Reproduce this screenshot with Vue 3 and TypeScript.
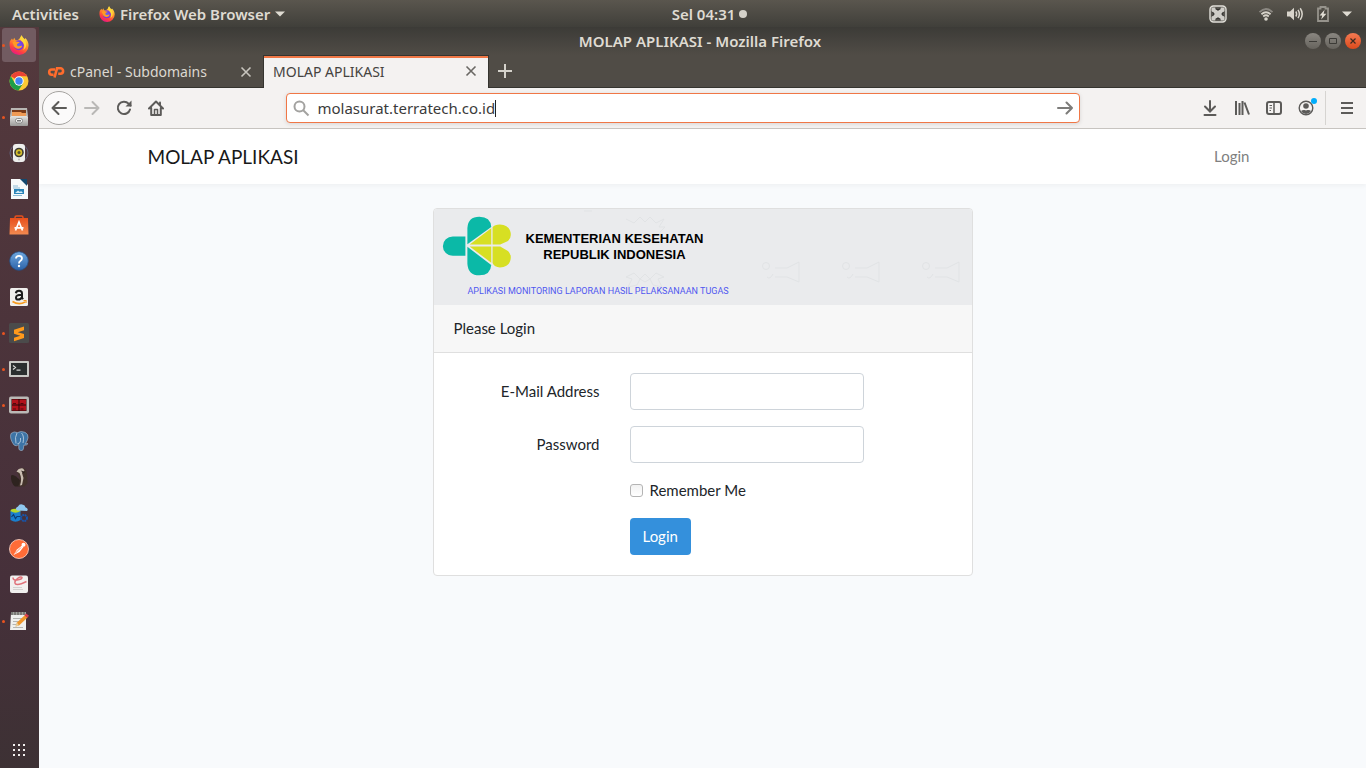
<script setup lang="ts">
import { ref } from 'vue'

interface DockApp {
  id: string
  label: string
  running?: boolean
  active?: boolean
}

const dockApps: DockApp[] = [
  { id: 'firefox', label: 'Firefox Web Browser', running: true, active: true },
  { id: 'chrome', label: 'Google Chrome' },
  { id: 'files', label: 'Files', running: true },
  { id: 'rhythmbox', label: 'Rhythmbox' },
  { id: 'writer', label: 'LibreOffice Writer' },
  { id: 'software', label: 'Ubuntu Software' },
  { id: 'help', label: 'Help' },
  { id: 'amazon', label: 'Amazon' },
  { id: 'sublime', label: 'Sublime Text', running: true },
  { id: 'terminal', label: 'Terminal', running: true },
  { id: 'terminator', label: 'Terminator', running: true },
  { id: 'postgres', label: 'pgAdmin' },
  { id: 'dbeaver', label: 'DBeaver' },
  { id: 'datastudio', label: 'Data Studio' },
  { id: 'postman', label: 'Postman' },
  { id: 'evince', label: 'Document Viewer' },
  { id: 'gedit', label: 'Text Editor', running: true },
]

const address = ref('molasurat.terratech.co.id')
const email = ref('')
const password = ref('')
const remember = ref(false)
</script>

<template>
  <div class="desktop">
    <svg class="defs" width="0" height="0" aria-hidden="true">
      <defs>
        <linearGradient id="fx-body" x1="0.8" y1="0" x2="0.3" y2="1">
          <stop offset="0" stop-color="#fff44f" />
          <stop offset="0.4" stop-color="#ff9a2a" />
          <stop offset="0.75" stop-color="#ff4040" />
          <stop offset="1" stop-color="#e5158b" />
        </linearGradient>
        <radialGradient id="fx-globe">
          <stop offset="0" stop-color="#5b6df0" />
          <stop offset="1" stop-color="#8330d8" />
        </radialGradient>
        <linearGradient id="help-blue" x1="0" y1="0" x2="0" y2="1">
          <stop offset="0" stop-color="#6fa8e0" />
          <stop offset="1" stop-color="#2c62a8" />
        </linearGradient>
        <linearGradient id="bag" x1="0" y1="0" x2="0" y2="1">
          <stop offset="0" stop-color="#e8501c" />
          <stop offset="1" stop-color="#f28a50" />
        </linearGradient>
        <linearGradient id="metal" x1="0" y1="0" x2="0" y2="1">
          <stop offset="0" stop-color="#e4e4e2" />
          <stop offset="1" stop-color="#9b9a98" />
        </linearGradient>
        <symbol id="fx" viewBox="0 0 20 20">
          <path fill="url(#fx-body)" d="M1 6 3 3.4 4 5.2 5.2 2.8 6.6 5.2 9 5C10 4 11.6 3 12.6.2c1 1.6 1.6 2.8 3.2 4l.4-1.2c2.2 2 3.4 4.6 3.4 7.6a9.5 9.3 0 0 1-19 0C.6 8.8.5 7.2 1 6z" />
          <circle cx="9.800" cy="10.200" r="5" fill="url(#fx-globe)" />
          <path fill="#ff9b24" d="M3.500 7.500c1.400-1.500 3.600-1.400 5-.7l2.200.2c-.4 1.400-2.200 1.400-2.700 2.400-.2 1 .8 2 2.200 1.800 1.500 0 2-.8 3-.2-.8 2-2.400 3-4.400 2.700-2.600-.3-4.300-2.200-4.500-4.500z" />
          <path fill="#ffd83a" d="M12.600.2c.4 2.600 4.400 4.400 4.600 8.800.2 3-1.200 5-3 6 1.200-2 1.400-4.600.4-6.600C13.600 6.400 11 5.600 11.200 3c.2-1.200.8-2 1.400-2.800z" />
        </symbol>
      </defs>
    </svg>

    <header class="topbar">
      <div class="topbar-left">
        <button type="button" class="bar-button">Activities</button>
        <button type="button" class="bar-button app-menu">
          <svg width="16" height="16" aria-hidden="true"><use href="#fx" /></svg>
          <span>Firefox Web Browser</span>
          <svg width="10" height="6" viewBox="0 0 10 6" aria-hidden="true"><path d="M0 0.500h10L5 5.500z" fill="#dfdbd2" /></svg>
        </button>
      </div>
      <button type="button" class="bar-button clock">
        <span>Sel 04:31</span>
        <i class="notice-dot"></i>
      </button>
      <div class="topbar-right">
        <button type="button" class="bar-button" aria-label="Input tray">
          <svg width="18" height="18" viewBox="0 0 18 18" aria-hidden="true">
            <rect x="1" y="1" width="16" height="16" rx="3.500" fill="#5a5853" stroke="#e2e0da" stroke-width="1.400" />
            <path d="M2.500 2.500h3.500l3 3 3-3h3.500v3.500l-2.500 3 2.500 3v3.500H12l-3-2.500-3 2.500H2.500V12L5 9 2.500 6z" fill="#cfcdc8" />
            <path d="M6.500 3.500 9 5l2.500-1.500M6.500 14.500 9 13l2.500 1.500M3.500 7 5 9l-1.500 2M14.500 7 13 9l1.500 2" fill="none" stroke="#2f2e2b" stroke-width="1.200" />
          </svg>
        </button>
        <button type="button" class="bar-button status" aria-label="System menu">
          <svg width="16" height="16" viewBox="0 0 16 16" fill="none" stroke="#d8d4cb" stroke-width="1.800" aria-hidden="true">
            <path d="M1.500 6.200Q8-.2 14.500 6.200" stroke="#8b8882" />
            <path d="M3.400 8.300q4.600-4 9.200 0M5.200 10.500q2.800-2.400 5.600 0" />
            <circle cx="8" cy="13" r="1.800" fill="#d8d4cb" stroke="none" />
          </svg>
          <svg width="18" height="16" viewBox="0 0 18 16" fill="none" stroke="#d8d4cb" stroke-width="1.500" aria-hidden="true">
            <path d="M1 5.500h3L8 1.800v12.400L4 10.500H1z" fill="#d8d4cb" stroke="none" />
            <path d="M9.800 5.500q1.600 2.500 0 5M12 3.800q2.800 4.200 0 8.400M14.200 2.200q4 5.800 0 11.600" />
          </svg>
          <svg width="14" height="18" viewBox="0 0 14 18" aria-hidden="true">
            <path d="M2 3.500h2.500V2h5v1.500H12v12.500H2z" fill="none" stroke="#96938c" stroke-width="1.800" />
            <path d="M8.600 4.800 3.600 10.500h2.600L5.200 14.400l5.200-5.600H7.600z" fill="#e2ded5" />
          </svg>
          <svg width="10" height="6" viewBox="0 0 10 6" aria-hidden="true"><path d="M0 0.500h10L5 5.500z" fill="#dfdbd2" /></svg>
        </button>
      </div>
    </header>

    <div class="workspace">
      <nav class="dock" aria-label="Applications">
        <button
          v-for="app in dockApps"
          :key="app.id"
          type="button"
          class="dock-item"
          :class="{ running: app.running, active: app.active }"
          :aria-label="app.label"
        >
          <svg width="20" height="20" viewBox="0 0 20 20" aria-hidden="true">
            <use v-if="app.id === 'firefox'" href="#fx" />
            <g v-else-if="app.id === 'chrome'">
              <circle cx="10" cy="10" r="9.500" fill="#fcc934" />
              <path d="M10 10 1.800 5.200A9.500 9.500 0 0 1 18.200 5.300H10z" fill="#ea4335" />
              <path d="M1.800 5.200A9.500 9.500 0 0 0 9.500 19.500L14 12.400 10 10 5.900 12.300z" fill="#1e9e4a" />
              <circle cx="10" cy="10" r="4.700" fill="#fff" />
              <circle cx="10" cy="10" r="3.700" fill="#4285f4" />
            </g>
            <g v-else-if="app.id === 'files'">
              <path d="M2 1h16l1 8H1z" fill="#b8b6b3" />
              <rect x="3" y="3" width="14" height="6" fill="#7a3a18" />
              <path d="M3 5h9l1 1h4v4H3z" fill="#ef9a55" />
              <rect x="1" y="9" width="18" height="10" rx="1" fill="url(#metal)" />
              <rect x="6.500" y="11.500" width="7" height="4.500" rx="2" fill="#f5f5f4" stroke="#777" stroke-width=".8" />
              <rect x="8" y="13" width="4" height="1.500" fill="#777" />
            </g>
            <g v-else-if="app.id === 'rhythmbox'">
              <circle cx="10" cy="10" r="9" fill="none" stroke="#61637d" stroke-width="1" />
              <rect x="4" y="1" width="12" height="18" rx="3" fill="#eeeeec" />
              <circle cx="10" cy="9.500" r="4.800" fill="#3d3c34" />
              <circle cx="10" cy="9.500" r="3.200" fill="#d4bd2c" />
              <circle cx="10" cy="9.500" r="1.500" fill="#55512f" />
              <circle cx="10" cy="16.500" r="1" fill="#bbb" />
            </g>
            <g v-else-if="app.id === 'writer'">
              <path d="M2 0h11l6 6v14H2z" fill="#f7f9fa" />
              <path d="M11 0h7v7z" fill="#13486e" />
              <path d="M4 7h5M4 9h7M4 16.500h9" stroke="#8fbcd6" stroke-width="1.200" />
              <rect x="5" y="10" width="10" height="5" fill="#2b84b8" />
              <path d="M6 14l3-2.500 2 1.500 1-1 2 2z" fill="#d8edf8" />
            </g>
            <g v-else-if="app.id === 'software'">
              <path d="M6 4V2.500Q6 1 7.500 1h5Q14 1 14 2.500V4" fill="none" stroke="#e8501c" stroke-width="1.500" />
              <path d="M1 3h18l.5 16.500H.5z" fill="url(#bag)" />
              <path d="M6.500 15.500 10 7l3.500 8.500M5.500 12.800h9" fill="none" stroke="#fff" stroke-width="1.700" />
            </g>
            <g v-else-if="app.id === 'help'">
              <circle cx="10" cy="10" r="9.300" fill="url(#help-blue)" stroke="#244f87" stroke-width=".8" />
              <path d="M7 7.500Q7 4.800 10 4.800t3 2.500Q13 9 11.300 10 10 10.800 10 12.500" fill="none" stroke="#fff" stroke-width="1.800" />
              <circle cx="10" cy="15" r="1.200" fill="#fff" />
            </g>
            <g v-else-if="app.id === 'amazon'">
              <rect x="1" y="1" width="18" height="18" rx="1.500" fill="#f0efed" />
              <path d="M6.800 6.200Q7.300 3.800 10 3.800q3 0 3 2.700v4.200l1 1.600M13 7.800Q7 7.600 7 10.400 7 12.600 9.200 12.600 12 12.600 13 9.800" fill="none" stroke="#1b1b1b" stroke-width="2" />
              <path d="M3.500 14.500Q10 18.500 16 15" fill="none" stroke="#f79a1e" stroke-width="1.500" />
              <path d="M14.500 13.500h2.500v2.500" fill="none" stroke="#f79a1e" stroke-width="1.200" />
            </g>
            <g v-else-if="app.id === 'sublime'">
              <rect width="20" height="20" rx="1.500" fill="#4b4b4b" />
              <path d="M15 3.500 5 6.800v4L11.300 12.800 5 14.700v3.500L15 15v-4L8.800 9.200 15 7.200z" fill="#ff9a1c" />
            </g>
            <g v-else-if="app.id === 'terminal'">
              <rect x="0" y="2" width="20" height="16" rx="1" fill="#c9c8c5" />
              <rect x="2" y="4" width="16" height="12" fill="#2b2e2f" />
              <path d="M4 6.500 6.500 8.500 4 10.500M7.500 11.200h4" fill="none" stroke="#d8d8d6" stroke-width="1.200" />
            </g>
            <g v-else-if="app.id === 'terminator'">
              <rect x="0" y="1.500" width="20" height="17" rx="2" fill="#bab9b6" />
              <rect x="2.500" y="4" width="15" height="12" fill="#240608" />
              <path d="M3 4.500h6.500v5H3zM10.500 4.500H17v5h-6.500zM3 10.500h6.500v5H3zM10.500 10.500H17v5h-6.500z" fill="#b3121c" />
              <path d="M4 8.500h3M11.500 8.500h3M4 14h3M11.500 14h3" stroke="#50080d" />
            </g>
            <g v-else-if="app.id === 'postgres'">
              <path d="M2 2.500Q5-.2 8.500 1.600 12-.4 16 1.300q3.600 1.800 3 5.500-.6 3-2.600 6l2.600-.2q-1 1.900-4.200 1.700l-.4 3.600q-.5 2-2.600 1.600-2.200-.4-2-2.500V13.600Q7 15.800 5 14 .2 7.500 2 2.500z" fill="#3d74a6" stroke="#a9c0d4" stroke-width=".6" />
              <path d="M8 2Q5.500 6 7 12.500M12.500 2Q15.500 5 14 12M8.500 12.500Q12 13 11.500 7" fill="none" stroke="#c3d6e6" stroke-width=".8" />
            </g>
            <g v-else-if="app.id === 'dbeaver'">
              <path d="M2 8.500Q4 7 7 9.500L11 13v6.500H6Q1.500 16 2 8.500z" fill="#2e231f" />
              <path d="M8 5Q10 .5 14 1q4 1 4 6l.5 9-3 3.500H9Q12.500 14 9.500 8z" fill="#43332c" />
              <path d="M7.500 4.500Q10 .5 14 1.500l1.500 2L13 6l1.500 5-1.500 7-2 .5Q13.500 12 10.500 6z" fill="#c9bdb0" />
              <path d="M12 3.500 16 5l-2 1.500z" fill="#2e231f" />
            </g>
            <g v-else-if="app.id === 'datastudio'">
              <ellipse cx="6.500" cy="8" rx="5" ry="2.200" fill="#b6d82a" />
              <path d="M1.500 8q5 3.500 10 0v9q-5 3.500-10 0z" fill="#1a7fce" />
              <path d="M2.500 14l2-2.500 2 4 1.500-2h4" fill="none" stroke="#0b3d75" stroke-width="1.200" />
              <path d="M8 7.500Q5.500 5 9 3.600 10.500.3 14 1.700q2 .4 2.400 2.600Q20 5.500 18 8z" fill="#8fc8ef" />
              <circle cx="15" cy="15" r="3" fill="none" stroke="#1656ae" stroke-width="2" stroke-dasharray="1.800 .6" />
            </g>
            <g v-else-if="app.id === 'postman'">
              <circle cx="10" cy="10" r="9.500" fill="#ff6c37" stroke="#ffd9cb" stroke-width=".8" />
              <path d="M4.500 16 8 10.500 13 6.500l1.500 1.500L10.500 13z" fill="#fff" />
              <circle cx="14.500" cy="5.800" r="2" fill="#fff" />
              <path d="M6 14.500 12 8.500" stroke="#ff6c37" stroke-width=".8" />
            </g>
            <g v-else-if="app.id === 'evince'">
              <rect x="1" y="0.500" width="18" height="17.500" rx="2" fill="#f1f0ef" />
              <path d="M4 2.500q0 3 4 2.500 5-.5 5-2.500Q12 1 8.500 3.500 4.500 7 6.500 9q3 1.500 11-2.500" fill="none" stroke="#e0727a" stroke-width="1.500" />
              <path d="M4 12.500h9M4 14.500h10" stroke="#d3d2d0" />
            </g>
            <g v-else>
              <path d="M2 2h15v17H1z" fill="#f0f0ee" />
              <path d="M2 1h15v3H2z" fill="#a3a39f" />
              <path d="M3 1v3M6 1v3M9 1v3M12 1v3M15 1v3" stroke="#55534f" />
              <path d="M4 7.500h9M4 10.500h6M3.500 13.500h4M4 16.500h10" stroke="#b5b5b2" />
              <path d="M6.500 15.500 8 11.500 16 4l2.500 2.500-8.500 8z" fill="#f0962b" />
              <path d="M15.500 4.500 17 2.500l3 2.200-1.700 2z" fill="#d83c4a" />
              <path d="M6.500 15.500 8 11.500l2 3z" fill="#e7cf9c" />
            </g>
          </svg>
        </button>
        <button type="button" class="dock-item show-apps" aria-label="Show Applications">
          <svg width="14" height="14" viewBox="0 0 14 14" fill="#f2efee" aria-hidden="true">
            <path d="M1 1h2v2H1zM6 1h2v2H6zM11 1h2v2h-2zM1 6h2v2H1zM6 6h2v2H6zM11 6h2v2h-2zM1 11h2v2H1zM6 11h2v2H6zM11 11h2v2h-2z" />
          </svg>
        </button>
      </nav>

      <section class="window">
        <div class="chrome">
          <div class="titlebar">
            <span></span>
            <span class="window-title">MOLAP APLIKASI - Mozilla Firefox</span>
            <div class="window-buttons">
              <button type="button" aria-label="Minimize">
                <svg width="16" height="16" viewBox="0 0 16 16" stroke="#3c3b37" aria-hidden="true"><path d="M4 8.500h8" /></svg>
              </button>
              <button type="button" aria-label="Maximize">
                <svg width="16" height="16" viewBox="0 0 16 16" fill="none" stroke="#3c3b37" aria-hidden="true"><path d="M4.500 5.500h7v5h-7z" /></svg>
              </button>
              <button type="button" class="close" aria-label="Close">
                <svg width="16" height="16" viewBox="0 0 16 16" stroke="#3c2a20" stroke-width="1.200" aria-hidden="true"><path d="M5.500 5.500l5 5M10.500 5.500l-5 5" /></svg>
              </button>
            </div>
          </div>
          <div class="tabs" role="tablist">
            <div class="tab" role="tab" aria-selected="false">
              <svg class="favicon" width="18" height="14" viewBox="0 0 18 14" fill="none" stroke="#ff6c2c" stroke-width="2.600" aria-hidden="true">
                <path d="M8 4.500H4.800a2.600 2.600 0 0 0 0 5.200H6.500M7.500 12.500 10 3.300h3.400a2.600 2.600 0 0 1 0 5.400h-2.200" />
              </svg>
              <span class="tab-title">cPanel - Subdomains</span>
              <button type="button" class="tab-close" aria-label="Close tab">
                <svg width="12" height="12" viewBox="0 0 12 12" stroke="currentColor" stroke-width="1.600" aria-hidden="true"><path d="M1.500 1.500l9 9M10.500 1.500l-9 9" /></svg>
              </button>
            </div>
            <div class="tab selected" role="tab" aria-selected="true">
              <span class="tab-title">MOLAP APLIKASI</span>
              <button type="button" class="tab-close" aria-label="Close tab">
                <svg width="12" height="12" viewBox="0 0 12 12" stroke="currentColor" stroke-width="1.600" aria-hidden="true"><path d="M1.500 1.500l9 9M10.500 1.500l-9 9" /></svg>
              </button>
            </div>
            <button type="button" class="new-tab" aria-label="New tab">
              <svg width="14" height="14" viewBox="0 0 14 14" stroke="#d5d2cb" stroke-width="2" aria-hidden="true"><path d="M7 0v14M0 7h14" /></svg>
            </button>
          </div>
        </div>

        <div class="toolbar">
          <button type="button" class="tool back" aria-label="Back">
            <svg width="16" height="16" viewBox="0 0 16 16" fill="none" stroke="#5c5b59" stroke-width="2" stroke-linecap="round" stroke-linejoin="round" aria-hidden="true"><path d="M15 8H1.500M7.500 2 1.500 8l6 6" /></svg>
          </button>
          <button type="button" class="tool" aria-label="Forward">
            <svg width="16" height="16" viewBox="0 0 16 16" fill="none" stroke="#b9b8b6" stroke-width="2" stroke-linecap="round" stroke-linejoin="round" aria-hidden="true"><path d="M1 8h13.500M8.500 2l6 6-6 6" /></svg>
          </button>
          <button type="button" class="tool" aria-label="Reload">
            <svg width="16" height="16" viewBox="0 0 16 16" fill="none" stroke="#5c5b59" stroke-width="2" aria-hidden="true"><path d="M14 9.500A6.200 6.200 0 1 1 12.600 3.700L14.500 5.500" stroke-linecap="round" /><path d="M15.500.5v6h-6z" fill="#5c5b59" stroke="none" /></svg>
          </button>
          <button type="button" class="tool" aria-label="Home">
            <svg width="16" height="16" viewBox="0 0 16 16" fill="none" stroke="#5c5b59" stroke-width="2" stroke-linejoin="round" stroke-linecap="round" aria-hidden="true"><path d="M1 8.500 8 1.500l7 7M3.200 8v7h9.600V8" /><path d="M6.500 14V9.500h3V14" stroke-width="1.500" /><path d="M12 2.500v2" /></svg>
          </button>
          <span class="flex-space"></span>
          <label class="urlbar">
            <svg width="18" height="18" viewBox="0 0 18 18" fill="none" stroke="#a3a2a0" stroke-width="2" aria-hidden="true"><circle cx="7.500" cy="7.500" r="5" /><path d="M11 11l5.500 5.500" /></svg>
            <input v-model="address" type="text" aria-label="Address" spellcheck="false" />
            <i class="caret"></i>
            <button type="button" class="go" aria-label="Go">
              <svg width="16" height="16" viewBox="0 0 16 16" fill="none" stroke="#7d7c7a" stroke-width="2" stroke-linecap="round" stroke-linejoin="round" aria-hidden="true"><path d="M1 8h14M9.500 2.500 15 8l-5.500 5.500" /></svg>
            </button>
          </label>
          <span class="flex-space"></span>
          <button type="button" class="tool" aria-label="Downloads">
            <svg width="16" height="16" viewBox="0 0 16 16" fill="none" stroke="#5c5b59" stroke-width="2" stroke-linecap="round" aria-hidden="true"><path d="M8 1v10M3 6.500l5 5 5-5M2.500 15h11" /></svg>
          </button>
          <button type="button" class="tool" aria-label="Library">
            <svg width="16" height="16" viewBox="0 0 16 16" fill="none" stroke="#5c5b59" stroke-width="2" aria-hidden="true"><path d="M2 1v14M5.500 3v12M8.500 1v14M10.500 2.500 15 14.500" /></svg>
          </button>
          <button type="button" class="tool" aria-label="Sidebars">
            <svg width="16" height="16" viewBox="0 0 16 16" fill="none" stroke="#5c5b59" stroke-width="2" aria-hidden="true"><rect x="1" y="2" width="14" height="12" rx="2" /><path d="M8 2v12" stroke-width="1.500" /><path d="M3.500 5.500h2.500M3.500 8h2.500M3.500 10.500H5" stroke-width="1" /></svg>
          </button>
          <button type="button" class="tool account" aria-label="Account">
            <svg width="16" height="16" viewBox="0 0 16 16" aria-hidden="true"><circle cx="8" cy="8" r="6.800" fill="none" stroke="#5c5b59" stroke-width="1.400" /><circle cx="8" cy="6" r="2.800" fill="#5c5b59" /><path d="M3 11q2-1.500 3.500-1 1.500.8 3 0 2-.4 3.500 1-1.800 3-5 3t-5-3z" fill="#5c5b59" /></svg>
            <i class="badge"></i>
          </button>
          <span class="divider"></span>
          <button type="button" class="tool" aria-label="Open menu">
            <svg width="14" height="14" viewBox="0 0 14 14" stroke="#5c5b59" stroke-width="2" aria-hidden="true"><path d="M1 2h12M1 7h12M1 12h12" /></svg>
          </button>
        </div>

        <div class="page">
          <nav class="navbar">
            <div class="container">
              <a class="brand" href="#">MOLAP APLIKASI</a>
              <a class="nav-link" href="#">Login</a>
            </div>
          </nav>
          <main class="main">
            <div class="card">
              <div class="banner">
                <svg class="watermark" viewBox="0 0 538 96" preserveAspectRatio="xMinYMin slice" fill="none" stroke="#e1e3e5" stroke-width="1" aria-hidden="true">
                  <g v-for="x in [330, 410, 490]" :key="x">
                    <circle :cx="x + 2" cy="57" r="3.500" />
                    <path :d="`M${x + 11} 59h12l12-6v20l-12-5h-12M${x + 3} 68q3 3 6-3`" />
                  </g>
                  <path d="M192 10l8 4 6-6 5 5 5-5 6 6 8-4-5 8h6l-5 5M192 68l8-4 6 6 5-5 5 5 6-6 8 4-6 2 4 8-9-2-3-6-5 3-5-3-3 6-9 2 4-8zM150 2h8" />
                </svg>
                <div class="ministry">
                  <svg width="70" height="60" viewBox="36 46 210 181" aria-hidden="true">
                    <path d="M106 108H68a30 29 0 0 0 0 58h38z" fill="#0bb9a7" />
                    <path d="M112 131V82Q114 48 148 48q34 0 36 31zM112 139v51q2 35 36 35 34 0 36-31z" fill="#0bb9a7" />
                    <path d="M119 132 184 83v49zM119 138l65 49v-49zM188 132V80q6-8 22-8 33 2 33 31 0 12-10 19l-22 10zM188 138v50q6 13 22 13 33-2 33-31 0-12-10-19l-22-13z" fill="#d7df23" />
                  </svg>
                  <strong class="ministry-name">KEMENTERIAN KESEHATAN<br />REPUBLIK INDONESIA</strong>
                </div>
                <p class="tagline">APLIKASI MONITORING LAPORAN HASIL PELAKSANAAN TUGAS</p>
              </div>
              <div class="card-header">Please Login</div>
              <form class="card-body" @submit.prevent>
                <label class="field-label" for="email">E-Mail Address</label>
                <input id="email" v-model="email" class="field" type="email" />
                <label class="field-label" for="password">Password</label>
                <input id="password" v-model="password" class="field" type="password" />
                <label class="remember" for="remember">
                  <input id="remember" v-model="remember" type="checkbox" />
                  <span>Remember Me</span>
                </label>
                <button type="submit" class="submit">Login</button>
              </form>
            </div>
          </main>
        </div>
      </section>
    </div>
  </div>
</template>

<style>
body {
  margin: 0;
}
</style>

<style scoped>
* {
  box-sizing: border-box;
}

.desktop {
  display: flex;
  flex-direction: column;
  min-height: 100vh;
  font-family: "Noto Sans", "Open Sans", sans-serif;
  font-size: 14px;
  color: #3b3b3b;
}

.defs {
  position: absolute;
}

button {
  display: flex;
  align-items: center;
  justify-content: center;
  margin: 0;
  padding: 0;
  border: 0;
  background: none;
  font: inherit;
  color: inherit;
}

svg {
  display: block;
  flex: none;
}

/* Top panel */
.topbar {
  display: grid;
  grid-template-columns: 12fr auto 11fr;
  align-items: center;
  height: 27px;
  padding: 0 14px 0 12px;
  background: linear-gradient(#5a564e, #403f3a);
  color: #dfdbd2;
  font-size: 15px;
  line-height: 18px;
  font-weight: 600;
}

.topbar-left,
.topbar-right {
  display: flex;
  align-items: center;
}

.topbar-left {
  gap: 20px;
}

.topbar-right {
  justify-content: flex-end;
  gap: 31px;
}

.app-menu {
  gap: 5px;
}

.clock {
  gap: 4px;
}

.notice-dot {
  width: 8px;
  height: 8px;
  border-radius: 50%;
  background: #d5d2ca;
}

.status {
  gap: 12px;
}

/* Dock */
.workspace {
  display: flex;
  flex: 1;
}

.dock {
  display: flex;
  flex-direction: column;
  flex: none;
  width: 39px;
  background: linear-gradient(#54393d, #4c343b 40%, #46303a 75%, #3d3134);
}

.dock-item {
  position: relative;
  width: 34px;
  height: 34px;
  margin: 1px 2px;
  border-radius: 3px;
}

.dock-item.active {
  background: #725b61;
}

.dock-item.running::before {
  content: "";
  position: absolute;
  left: 0;
  top: 16px;
  width: 3px;
  height: 3px;
  border-radius: 50%;
  background: #e95420;
}

.show-apps {
  margin-top: auto;
}

/* Browser window */
.window {
  display: flex;
  flex: 1;
  flex-direction: column;
  min-width: 0;
}

.chrome {
  background: linear-gradient(#3c3b37, #504c46 28px);
}

.titlebar {
  display: grid;
  grid-template-columns: 1fr auto 1fr;
  align-items: center;
  height: 28px;
  padding-right: 5px;
  color: #dfdbd2;
}

.window-title {
  font-size: 15px;
  line-height: 18px;
  font-weight: 600;
}

.window-buttons {
  display: flex;
  justify-content: flex-end;
  gap: 4px;
}

.window-buttons button {
  width: 16px;
  height: 16px;
  border-radius: 50%;
  background: linear-gradient(#8a8781, #66635d);
}

.window-buttons .close {
  background: linear-gradient(#f47a52, #dc4a1c);
}

.tabs {
  display: flex;
  height: 33px;
  box-shadow: inset 0 -1px #35342f;
}

.tab {
  display: flex;
  align-items: center;
  width: 224px;
  padding: 0 11px 0 8px;
  color: #dcd8d0;
}

.tab.selected {
  width: 226px;
  border: 1px solid #35342f;
  border-bottom: 0;
  padding: 0 11px 2px 9px;
  background: #f4f2f1;
  box-shadow: inset 0 2px #f07746;
  color: #45433f;
}

.favicon {
  margin-right: 5px;
}

.tab-title {
  flex: 1;
  white-space: nowrap;
}

.tab-close {
  color: #c8c5be;
}

.selected .tab-close {
  color: #6a6864;
}

.new-tab {
  width: 32px;
  padding-bottom: 1px;
}

.toolbar {
  display: flex;
  align-items: center;
  height: 41px;
  padding: 0 3px;
  border-bottom: 1px solid #c8c5c1;
  background: #f4f2f1;
}

.tool {
  position: relative;
  flex: none;
  width: 32px;
  height: 32px;
}

.tool.back {
  width: 34px;
  height: 34px;
  border: 1px solid #a5a3a0;
  border-radius: 50%;
  background: #fbfafa;
}

.flex-space {
  flex: 11;
}

.urlbar {
  display: flex;
  flex: 75;
  align-items: center;
  height: 30px;
  padding: 0 6px 0 5px;
  border: 1px solid #f07746;
  border-radius: 4px;
  background: #fff;
  box-shadow: 0 1px 4px rgba(0, 0, 0, 0.12);
}

.urlbar input {
  field-sizing: content;
  margin-left: 7px;
  padding: 0;
  border: 0;
  outline: 0;
  background: none;
  font: inherit;
  font-size: 15px;
  color: #3b3b3b;
}

.caret {
  width: 1px;
  height: 17px;
  background: #222;
}

.go {
  margin-left: auto;
}

.badge {
  position: absolute;
  top: 6px;
  right: 5px;
  width: 6px;
  height: 6px;
  border-radius: 50%;
  background: #00adfb;
}

.divider {
  width: 1px;
  height: 34px;
  margin: 0 5px 0 3px;
  background: #d6d4d1;
}

/* Web page */
.page {
  flex: 1;
  background: #f8fafc;
  font-family: Lato, "Open Sans", sans-serif;
  font-size: 15px;
  line-height: 23px;
  color: #212529;
}

.navbar {
  background: #fff;
  box-shadow: 0 2px 4px rgba(0, 0, 0, 0.04);
}

.container {
  display: flex;
  align-items: center;
  justify-content: space-between;
  max-width: 1140px;
  height: 55px;
  margin: 0 auto;
  padding: 0 15px;
}

.brand {
  color: #191919;
  font-size: 19px;
  text-decoration: none;
}

.nav-link {
  padding: 0 8px;
  color: #808080;
  text-decoration: none;
}

.main {
  padding: 24px 15px;
}

.card {
  max-width: 540px;
  margin: 0 auto;
  overflow: hidden;
  border: 1px solid #dfdfdf;
  border-radius: 4px;
  background: #fff;
}

.banner {
  position: relative;
  height: 96px;
  padding: 7px 8px 0;
  background: #eaebed;
}

.watermark {
  position: absolute;
  inset: 0;
  width: 100%;
  height: 100%;
}

.ministry {
  position: relative;
  display: flex;
  align-items: center;
  gap: 14px;
}

.ministry-name {
  padding-top: 2px;
  color: #000;
  font-family: "Liberation Sans", Arial, sans-serif;
  font-size: 13px;
  line-height: 16px;
  text-align: center;
}

.tagline {
  position: relative;
  margin: 9px 0 0 26px;
  color: #5058f0;
  font-family: Roboto, "Liberation Sans", sans-serif;
  font-size: 9px;
  line-height: 12px;
  white-space: nowrap;
}

.card-header {
  padding: 12px 20px;
  border-bottom: 1px solid #dfdfdf;
  background: #f7f7f7;
}

.card-body {
  display: grid;
  grid-template-columns: 146px 234px;
  column-gap: 30px;
  row-gap: 16px;
  align-items: center;
  padding: 20px;
}

.field-label {
  text-align: right;
}

.field {
  width: 100%;
  height: 37px;
  padding: 6px 12px;
  border: 1px solid #ced4da;
  border-radius: 4px;
  background: #fff;
  font: inherit;
}

.remember {
  display: flex;
  grid-column: 2;
  align-items: center;
  gap: 7px;
}

.remember input {
  appearance: none;
  width: 13px;
  height: 13px;
  margin: 0;
  border: 1px solid #b4b4b4;
  border-radius: 3px;
  background: linear-gradient(#f2f2f2, #fff);
}

.remember input:checked {
  background: #3490dc;
}

.submit {
  grid-column: 2;
  justify-self: start;
  height: 37px;
  padding: 0 13px;
  border-radius: 4px;
  background: #3490dc;
  color: #fff;
}
</style>
